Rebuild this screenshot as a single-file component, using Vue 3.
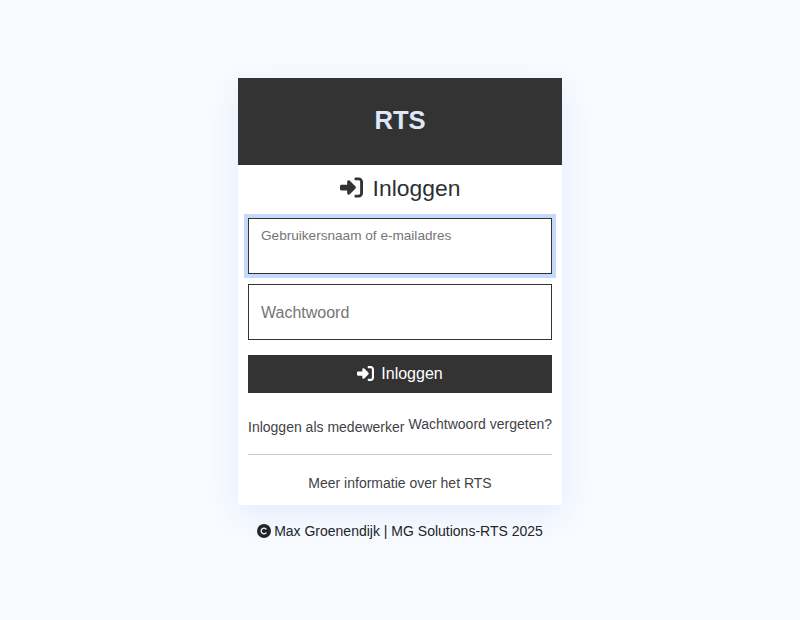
<script setup>
const signInPath = 'M217.9 105.9L340.7 228.7c7.2 7.2 11.3 17.1 11.3 27.3s-4.1 20.1-11.3 27.3L217.9 406.1c-6.4 6.4-15 9.9-24 9.9c-18.7 0-33.9-15.2-33.9-33.9l0-62.1L32 320c-17.7 0-32-14.3-32-32l0-64c0-17.7 14.3-32 32-32l128 0 0-62.1c0-18.7 15.2-33.9 33.9-33.9c9 0 17.6 3.6 24 9.9zM352 416l64 0c17.7 0 32-14.3 32-32l0-256c0-17.7-14.3-32-32-32l-64 0c-17.7 0-32-14.3-32-32s14.3-32 32-32l64 0c53 0 96 43 96 96l0 256c0 53-43 96-96 96l-64 0c-17.7 0-32-14.3-32-32s14.3-32 32-32z'
const copyrightPath = 'M256 512A256 256 0 1 0 256 0a256 256 0 1 0 0 512zM199.4 312.6c31.2 31.2 81.9 31.2 113.1 0c9.4-9.4 24.6-9.4 33.9 0s9.4 24.6 0 33.9c-50 50-131 50-181 0s-50-131 0-181s131-50 181 0c9.4 9.4 9.4 24.6 0 33.9s-24.6 9.4-33.9 0c-31.2-31.2-81.9-31.2-113.1 0s-31.2 81.9 0 113.1z'
</script>

<template>
  <div class="page">
    <main class="card">
      <header class="card-header">RTS</header>
      <div class="card-body">
        <h1 class="title">
          <svg class="title-icon" viewBox="0 0 512 512"><path :d="signInPath" /></svg>
          Inloggen
        </h1>
        <form class="form" @submit.prevent>
          <textarea class="field field-focus" placeholder="Gebruikersnaam of e-mailadres"></textarea>
          <input class="field field-password" type="password" placeholder="Wachtwoord" />
          <button class="submit" type="submit">
            <svg class="submit-icon" viewBox="0 0 512 512"><path :d="signInPath" /></svg>
            Inloggen
          </button>
        </form>
        <div class="links">
          <a class="link link-low" href="#">Inloggen als medewerker</a>
          <a class="link" href="#">Wachtwoord vergeten?</a>
        </div>
        <hr class="divider" />
        <a class="link more" href="#">Meer informatie over het RTS</a>
      </div>
    </main>
    <footer class="footer">
      <svg class="footer-icon" viewBox="0 0 512 512"><path :d="copyrightPath" /></svg>
      Max Groenendijk | MG Solutions-RTS 2025
    </footer>
  </div>
</template>

<style>
body {
  margin: 0;
  background: #f8fbff;
}
</style>

<style scoped>
.page {
  min-height: 620px;
  display: flex;
  flex-direction: column;
  align-items: center;
  justify-content: center;
  font-family: "Liberation Sans", Arial, sans-serif;
  color: #212529;
}

.card {
  width: 324px;
  background: #fff;
  box-shadow: 0 10px 30px rgba(90, 120, 230, 0.12);
}

.card-header {
  height: 87px;
  padding-bottom: 2px;
  box-sizing: border-box;
  display: flex;
  align-items: center;
  justify-content: center;
  background: #333;
  color: #dfe7fa;
  font-size: 25.6px;
  font-weight: 700;
}

.card-body {
  padding: 10px 10px 13px;
  display: flex;
  flex-direction: column;
}

.title {
  margin: 0;
  height: 26px;
  display: flex;
  align-items: center;
  justify-content: center;
  gap: 10px;
  font-size: 22.9px;
  font-weight: 400;
  line-height: 26px;
  color: #2b2f33;
}

.title-icon {
  width: 23px;
  height: 23px;
  fill: #333;
}

.form {
  margin-top: 17px;
  display: flex;
  flex-direction: column;
}

.field {
  display: block;
  box-sizing: border-box;
  width: 304px;
  height: 56px;
  margin: 0;
  padding: 8px 12px;
  border: 1px solid #333;
  border-radius: 0;
  background: #fff;
  outline: none;
  font-family: inherit;
  resize: none;
}

.field-focus {
  font-size: 13.6px;
  line-height: 17px;
  box-shadow: 0 0 0 4px #c5d9fb;
}

.field-password {
  margin-top: 10px;
  padding-top: 10px;
  font-size: 16px;
}

.submit {
  margin-top: 15px;
  height: 38px;
  display: flex;
  align-items: center;
  justify-content: center;
  gap: 7px;
  border: 0;
  background: #333;
  color: #fff;
  font-family: inherit;
  font-size: 16px;
}

.submit-icon {
  width: 17px;
  height: 17px;
  fill: #fff;
}

.links {
  margin-top: 22px;
  height: 20px;
  display: flex;
  justify-content: space-between;
  align-items: flex-start;
}

.link {
  color: #3f4347;
  font-size: 14px;
  line-height: 18px;
  text-decoration: none;
  white-space: nowrap;
}

.link-low {
  margin-top: 3px;
}

.divider {
  width: 100%;
  margin: 19px 0 0;
  border: 0;
  border-top: 1px solid #c8c8c8;
}

.more {
  margin-top: 19px;
  text-align: center;
}

.footer {
  margin-top: 18px;
  padding-bottom: 3px;
  display: flex;
  align-items: center;
  gap: 3px;
  font-size: 14px;
  line-height: 17px;
}

.footer-icon {
  width: 14px;
  height: 14px;
  fill: #212529;
}
</style>
